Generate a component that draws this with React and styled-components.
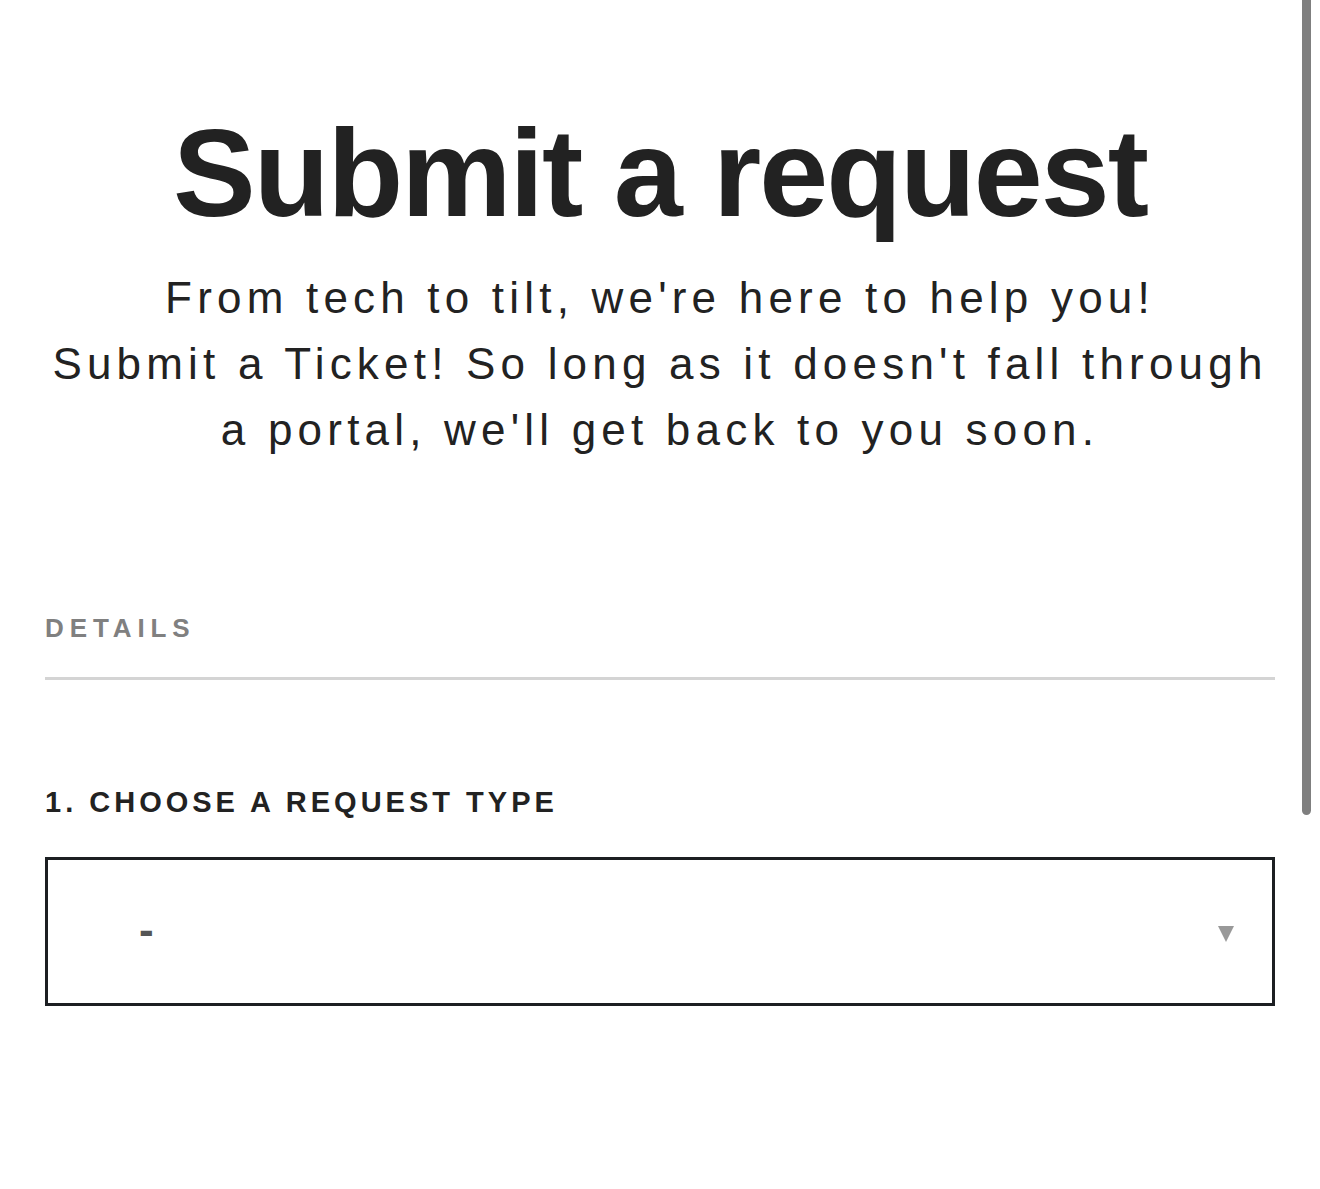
import React from "react";
import styled, { createGlobalStyle } from "styled-components";

const GlobalStyle = createGlobalStyle`
  html, body {
    margin: 0;
    padding: 0;
    background: #fff;
  }
  body {
    font-family: "Liberation Sans", Arial, Helvetica, sans-serif;
    color: #222;
  }
`;

const Page = styled.div`
  position: relative;
  min-height: 1189px;
  padding: 99px 45px 0;
  box-sizing: border-box;
`;

const Hero = styled.header`
  text-align: center;
`;

const Title = styled.h1`
  margin: 0;
  font-size: 124px;
  line-height: 1.2;
  font-weight: 700;
  letter-spacing: -2px;
  color: #222;
`;

const Lead = styled.p`
  margin: 17px 0 0;
  font-size: 44px;
  line-height: 66px;
  letter-spacing: 5.2px;
  color: #222;
`;

const Section = styled.div`
  margin-top: 153px;
  padding-bottom: 36px;
  border-bottom: 3px solid #d4d4d4;
`;

const SectionTitle = styled.h2`
  margin: 0;
  font-size: 26px;
  line-height: 25px;
  font-weight: 700;
  letter-spacing: 5.9px;
  color: #808080;
`;

const Field = styled.div`
  margin-top: 108px;
`;

const Label = styled.label`
  display: block;
  font-size: 29px;
  line-height: 28px;
  font-weight: 700;
  letter-spacing: 4px;
  color: #222;
`;

const SelectBox = styled.div`
  margin-top: 41px;
  height: 149px;
  box-sizing: border-box;
  border: 3px solid #1c1f22;
  display: flex;
  align-items: center;
  justify-content: space-between;
  padding: 0 38px 0 91px;
`;

const Value = styled.span`
  font-size: 44px;
  font-weight: 700;
  color: #555;
  line-height: 1;
  margin-top: -2px;
`;

const Caret = styled.span`
  width: 0;
  height: 0;
  border-left: 8px solid transparent;
  border-right: 8px solid transparent;
  border-top: 16px solid #999;
  margin-top: 6px;
`;

const ScrollThumb = styled.div`
  position: absolute;
  top: -6px;
  right: 9px;
  width: 9px;
  height: 821px;
  border-radius: 5px;
  background: #7f7f7f;
`;

export default function App() {
  return (
    <>
      <GlobalStyle />
      <Page>
        <Hero>
          <Title>Submit a request</Title>
          <Lead>
            From tech to tilt, we're here to help you!
            <br />
            Submit a Ticket! So long as it doesn't fall through a portal,
            we'll get back to you soon.
          </Lead>
        </Hero>
        <Section>
          <SectionTitle>DETAILS</SectionTitle>
        </Section>
        <Field>
          <Label>1. CHOOSE A REQUEST TYPE</Label>
          <SelectBox>
            <Value>-</Value>
            <Caret />
          </SelectBox>
        </Field>
        <ScrollThumb />
      </Page>
    </>
  );
}
